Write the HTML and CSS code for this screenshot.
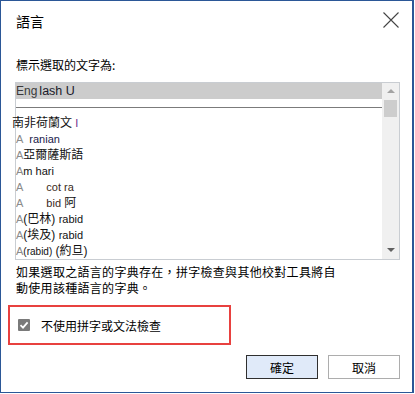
FILE: index.html
```html
<!DOCTYPE html>
<html lang="zh-Hant">
<head>
<meta charset="utf-8">
<title>語言</title>
<link rel="stylesheet" href="styles.css">
</head>
<body>
<div class="dialog">
  <div class="header">
    <div class="title">語言</div>
    <svg class="close" width="16" height="16" viewBox="0 0 16 16">
      <path d="M0.5 0.5 L15.5 15.5 M15.5 0.5 L0.5 15.5" stroke="#444" stroke-width="1.1" fill="none"/>
    </svg>
  </div>
  <div class="label">標示選取的文字為:</div>
  <div class="listbox">
    <div class="rows">
      <div class="row selected"><span class="lt eng">Eng</span><span class="lt lash">lash U</span></div>
      <div class="row sep"><div class="sepline"></div></div>
      <div class="row shift">南非荷蘭文 <span class="lt purple">I</span></div>
      <div class="row"><span class="lt a">A</span><span class="lt gap1">ranian</span></div>
      <div class="row"><span class="lt a">A</span>亞爾薩斯語</div>
      <div class="row"><span class="lt a">A</span><span class="lt">m hari</span></div>
      <div class="row"><span class="lt a">A</span><span class="lt gap2">cot ra</span></div>
      <div class="row"><span class="lt a">A</span><span class="lt gap2">bid</span> 阿</div>
      <div class="row"><span class="lt a">A</span>(巴林) <span class="lt">rabid</span></div>
      <div class="row"><span class="lt a">A</span>(埃及) <span class="lt">rabid</span></div>
      <div class="row"><span class="lt a">A</span><span class="lt small">(rabid)</span> (約旦)</div>
    </div>
    <div class="scrollbar">
      <div class="arrow up"></div>
      <div class="thumb"></div>
      <div class="track"></div>
      <div class="arrow down"></div>
    </div>
  </div>
  <div class="desc">如果選取之語言的字典存在，拼字檢查與其他校對工具將自動使用該種語言的字典。</div>
  <div class="highlight">
    <span class="checkbox">
      <svg width="12" height="12" viewBox="0 0 12 12"><path d="M2.5 6.2 L5 8.6 L9.6 3.4" stroke="#fff" stroke-width="1.8" fill="none"/></svg>
    </span>
    <span class="cblabel">不使用拼字或文法檢查</span>
  </div>
  <div class="buttons">
    <button class="btn primary">確定</button>
    <button class="btn">取消</button>
  </div>
</div>
</body>
</html>
```
FILE: styles.css
```css
html, body {
  margin: 0;
  padding: 0;
  background: #ffffff;
}
body {
  font-family: "Liberation Sans", "Noto Sans CJK TC", sans-serif;
  color: #111;
}
.dialog {
  width: 414px;
  height: 393px;
  box-sizing: border-box;
  border: 1px solid #2b5797;
  border-right-width: 2px;
  display: flex;
  flex-direction: column;
  background: #fff;
}
.header {
  display: flex;
  justify-content: space-between;
  align-items: flex-start;
  padding: 10px 13px 0 15px;
}
.title {
  font-family: "Noto Sans CJK TC", sans-serif;
  font-size: 14px;
  line-height: 20px;
  color: #000;
}
.close {
  margin-top: 1px;
  display: block;
}
.label {
  margin: 26px 0 0 15px;
  font-family: "Noto Sans CJK TC", sans-serif;
  font-size: 12px;
  line-height: 16px;
  color: #000;
}
.listbox {
  margin: 9px 0 0 14px;
  width: 385px;
  height: 178px;
  box-sizing: border-box;
  border: 1px solid #c9cdd2;
  display: flex;
}
.rows {
  flex: 1;
  font-size: 12px;
  font-family: "Liberation Sans", "Noto Sans CJK TC", sans-serif;
  color: #111;
}
.row {
  height: 16px;
  line-height: 16px;
  white-space: nowrap;
}
.lt {
  font-family: "Liberation Sans", sans-serif;
  font-size: 11px;
}
.selected {
  background: #cccccc;
}
.eng {
  color: #3a3a3a;
  font-size: 12px;
}
.lash {
  margin-left: 2px;
  color: #1a1a2a;
  font-size: 12.5px;
}
.sep {
  padding-top: 8px;
  box-sizing: border-box;
}
.sepline {
  height: 1px;
  background: #7b7b7b;
}
.shift {
  margin-left: -4px;
}
.purple {
  color: #6b2a8c;
}
.a {
  color: #8a8a8a;
}
.gap1 {
  margin-left: 6px;
  color: #1a1a4a;
}
.gap2 {
  margin-left: 23px;
  color: #3a2a1a;
}
.small {
  font-size: 10px;
}
.scrollbar {
  width: 17px;
  background: #f0f0f0;
  display: flex;
  flex-direction: column;
  align-items: center;
}
.arrow {
  width: 0;
  height: 0;
  border-left: 4px solid transparent;
  border-right: 4px solid transparent;
}
.up {
  margin-top: 6px;
  border-bottom: 4px solid #a3a3a3;
}
.down {
  margin-bottom: 7px;
  border-top: 4px solid #606060;
}
.thumb {
  margin-top: 7px;
  width: 13px;
  height: 17px;
  background: #cdcdcd;
}
.track {
  flex: 1;
}
.desc {
  margin: 4px 0 0 15px;
  width: 332px;
  font-family: "Noto Sans CJK TC", sans-serif;
  font-size: 12px;
  line-height: 16px;
  letter-spacing: 0.3px;
  color: #000;
}
.highlight {
  margin: 9px 0 0 7px;
  width: 223px;
  height: 40px;
  box-sizing: border-box;
  border: 2px solid #e8413f;
  display: flex;
  align-items: center;
  padding-left: 8px;
}
.checkbox {
  width: 12px;
  height: 12px;
  background: #7a7a7a;
  border-radius: 1px;
  display: flex;
}
.cblabel {
  margin-left: 11px;
  font-family: "Noto Sans CJK TC", sans-serif;
  font-size: 12px;
  color: #000;
}
.buttons {
  display: flex;
  justify-content: flex-end;
  gap: 10px;
  padding: 10px 12px 0 0;
}
.btn {
  width: 72px;
  height: 24px;
  box-sizing: border-box;
  border: 1px solid #adadad;
  background: #ffffff;
  font-family: "Noto Sans CJK TC", sans-serif;
  font-size: 12px;
  color: #000;
  padding: 0;
  margin: 0;
}
.primary {
  background: #e0eaf9;
  border: 1px solid #2f2f2f;
}
```
